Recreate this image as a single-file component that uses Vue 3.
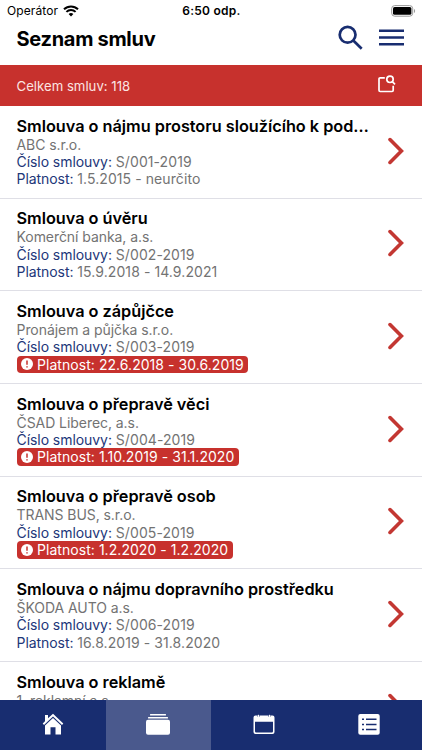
<template>
  <div class="screen">
    <div class="status-bar">
      <div class="carrier">
        <span class="carrier-name">Operátor</span>
        <svg class="wifi" viewBox="0 0 16 12">
          <path d="M1 4.3a10 10 0 0 1 14 0" />
          <path d="M3.4 6.9a6.6 6.6 0 0 1 9.2 0" />
          <path class="dot" d="M8 11.6 5.6 9.1a3.5 3.5 0 0 1 4.8 0z" />
        </svg>
      </div>
      <span class="time">6:50 odp.</span>
      <svg class="battery" viewBox="0 0 25 12">
        <rect class="shell" x="0.7" y="0.6" width="21" height="10.6" rx="3" />
        <rect x="2" y="2" width="18.4" height="7.8" rx="1.6" />
        <path class="cap" d="M23 4v4c1.5-.6 1.5-3.4 0-4z" />
      </svg>
    </div>

    <header class="header">
      <h1>Seznam smluv</h1>
      <svg class="search" viewBox="0 0 26 26">
        <circle cx="9.6" cy="9.8" r="7.9" />
        <path d="M15.3 15.5 23.7 23.7" />
      </svg>
      <svg class="menu" viewBox="0 0 25 17">
        <path d="M0 1.8h25M0 8.6h25M0 15.3h25" />
      </svg>
    </header>

    <div class="summary">
      <span>Celkem smluv: 118</span>
      <svg class="filter" viewBox="0 0 18 18">
        <path d="M6.8 2.9H2.2Q1 2.9 1 4.1V15.3Q1 16.5 2.2 16.5H14Q15.2 16.5 15.2 15.3V10.8" />
        <circle cx="12" cy="4.3" r="3.2" />
        <path d="M14.3 6.6 17 9.3" />
      </svg>
    </div>

    <ul class="list">
      <li v-for="item in contracts" :key="item.number" class="contract">
        <div class="info">
          <h2>{{ item.title }}</h2>
          <p>{{ item.company }}</p>
          <p><span class="label">Číslo smlouvy:</span> <span class="value">{{ item.number }}</span></p>
          <p v-if="item.expired" class="expired">
            <svg viewBox="0 0 12 12">
              <circle cx="6" cy="6" r="6" />
              <path d="M6 2.6V6.7M6 8.2V9.5" />
            </svg>
            <span>Platnost: {{ item.validity }}</span>
          </p>
          <p v-else><span class="label">Platnost:</span> <span class="value">{{ item.validity }}</span></p>
        </div>
        <svg class="chevron" viewBox="0 0 16 28">
          <path d="M2 2.6 13.4 14 2 25.4" />
        </svg>
      </li>
    </ul>

    <nav class="tabs">
      <div class="tab">
        <svg viewBox="0 0 24 24">
          <path d="M4 3h3v3.3L12 1.7 22.3 11.5 21 12.9 12 4.4 3 12.9 1.7 11.5 4 9.3z" />
          <path d="M4 13.5 12 6l8 7.5V22.5h-5.5V15.3h-5V22.5H4z" />
        </svg>
      </div>
      <div class="tab active">
        <svg class="wide" viewBox="0 0 26 24">
          <rect x="5" y="2" width="16" height="1.5" rx=".5" />
          <rect x="3" y="4.9" width="20" height="1.7" rx=".5" />
          <rect x="1" y="7.8" width="24" height="15" rx="2" />
        </svg>
      </div>
      <div class="tab">
        <svg viewBox="0 0 24 24">
          <path fill-rule="evenodd" d="M3.5 3.6H5v1h3v-1h8v1h3v-1h1.5q2 0 2 2v14.3q0 2-2 2h-17q-2 0-2-2V5.6q0-2 2-2zM3 9.7v9.500q0 1.200 1.200 1.200h15.600q1.200 0 1.200-1.200V9.7z" />
          <rect x="5.6" y="2.8" width="1.7" height="2.4" rx=".7" />
          <rect x="16.7" y="2.8" width="1.7" height="2.4" rx=".7" />
        </svg>
      </div>
      <div class="tab">
        <svg viewBox="0 0 24 24">
          <rect x="1.3" y="2" width="21.4" height="20.8" rx="2" />
          <path class="lines" d="M5 7.3h2M9 7.3h10.5M5 12.4h2M9 12.4h10.5M5 17.5h2M9 17.5h10.5" />
        </svg>
      </div>
    </nav>
  </div>
</template>

<script setup>
const contracts = [
  { title: 'Smlouva o nájmu prostoru sloužícího k podnikání', company: 'ABC s.r.o.', number: 'S/001-2019', validity: '1.5.2015 - neurčito' },
  { title: 'Smlouva o úvěru', company: 'Komerční banka, a.s.', number: 'S/002-2019', validity: '15.9.2018 - 14.9.2021' },
  { title: 'Smlouva o zápůjčce', company: 'Pronájem a půjčka s.r.o.', number: 'S/003-2019', validity: '22.6.2018 - 30.6.2019', expired: true },
  { title: 'Smlouva o přepravě věci', company: 'ČSAD Liberec, a.s.', number: 'S/004-2019', validity: '1.10.2019 - 31.1.2020', expired: true },
  { title: 'Smlouva o přepravě osob', company: 'TRANS BUS, s.r.o.', number: 'S/005-2019', validity: '1.2.2020 - 1.2.2020', expired: true },
  { title: 'Smlouva o nájmu dopravního prostředku', company: 'ŠKODA AUTO a.s.', number: 'S/006-2019', validity: '16.8.2019 - 31.8.2020' },
  { title: 'Smlouva o reklamě', company: '1. reklamní a.s.', number: 'S/007-2019', validity: '1.1.2019 - 31.12.2020' },
];
</script>

<style>
body {
  background: #fff;
  overflow: hidden;
}
</style>

<style scoped>
.screen {
  height: 100vh;
  display: flex;
  flex-direction: column;
  overflow: hidden;
  background: #fff;
  color: #000;
  font-family: Inter, "Liberation Sans", sans-serif;
}
.status-bar {
  flex: none;
  height: 21px;
  display: grid;
  grid-template-columns: 1fr auto 1fr;
  align-items: center;
  padding: 0 6px 0 7px;
  font-size: 12px;
}
.carrier { display: flex; align-items: center; gap: 5px; }
.carrier-name { letter-spacing: 0.1px; }
.wifi { width: 16px; height: 12px; fill: none; stroke: #000; stroke-width: 2; }
.wifi .dot { fill: #000; stroke: none; }
.time { font-weight: 600; letter-spacing: 0.25px; }
.battery { width: 25px; height: 12px; justify-self: end; }
.battery .shell { fill: none; stroke: #999; }
.battery .cap { fill: #999; }

.header {
  flex: none;
  box-sizing: border-box;
  height: 44px;
  display: flex;
  align-items: center;
  padding: 0 18px 8px 16.5px;
}
h1 {
  flex: 1;
  margin: 0;
  font-size: 20px;
  font-weight: 700;
  line-height: 26px;
  letter-spacing: -0.3px;
}
.search { width: 26px; height: 26px; margin-bottom: 2px; fill: none; stroke: #182d70; stroke-width: 2.7; }
.menu { width: 25px; height: 17px; margin: 0 0 3px 15px; fill: none; stroke: #182d70; stroke-width: 2.5; }

.summary {
  flex: none;
  height: 41px;
  display: flex;
  align-items: center;
  justify-content: space-between;
  padding: 0 26px 0 16.5px;
  background: #c7312d;
  color: #fbe4e2;
  font-size: 13.2px;
}
.filter { width: 18px; height: 18px; margin-top: -3px; fill: none; stroke: #fff; stroke-width: 1.7; }

.list {
  flex: 1;
  min-height: 0;
  overflow: hidden;
  margin: 0;
  padding: 0;
  list-style: none;
}
.contract {
  box-sizing: border-box;
  height: 92.7px;
  display: flex;
  justify-content: space-between;
  padding: 9.6px 18px 0 16.5px;
  border-bottom: 1px solid #dfdfe6;
}
.info { width: 356px; }
h2 {
  margin: 0;
  font-size: 16.3px;
  font-weight: 600;
  line-height: 20px;
  letter-spacing: -0.02px;
  white-space: nowrap;
  overflow: hidden;
  text-overflow: ellipsis;
}
p {
  margin: 0;
  color: #737373;
  font-size: 14px;
  line-height: 17.4px;
  letter-spacing: -0.06px;
  white-space: nowrap;
}
.label { color: #223679; }
.value { letter-spacing: 0.08px; }
.expired {
  width: max-content;
  display: flex;
  align-items: center;
  gap: 4.5px;
  padding: 0 4.5px 0 4px;
  border-radius: 4px;
  background: #c7312d;
  color: #fff;
  letter-spacing: 0.05px;
}
.expired svg { width: 12px; height: 12px; fill: #fff; }
.expired path { stroke: #c7312d; stroke-width: 1.5; }
.chevron { width: 16px; height: 28px; margin-top: 21px; fill: none; stroke: #c33732; stroke-width: 3.6; stroke-linecap: round; }

.tabs {
  flex: none;
  height: 50px;
  display: grid;
  grid-template-columns: repeat(4, 1fr);
  background: #182d70;
}
.tab { display: flex; justify-content: center; align-items: center; padding-bottom: 3px; }
.tab.active { background: #4a598d; }
.tab svg { width: 24px; height: 24px; fill: #fff; }
.tab svg.wide { width: 26px; }
.tab .lines { fill: none; stroke: #182d70; stroke-width: 1.5; }
</style>
